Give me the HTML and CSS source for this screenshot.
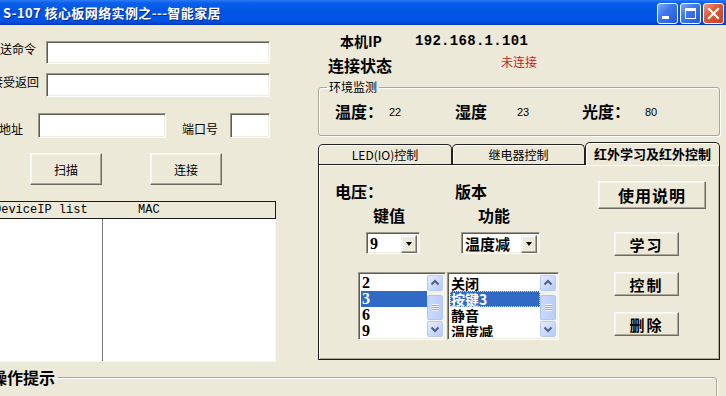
FILE: index.html
```html
<!DOCTYPE html>
<html lang="zh-CN">
<head>
<meta charset="utf-8">
<title>S-107 核心板网络实例之---智能家居</title>
<link rel="stylesheet" href="styles.css">
</head>
<body>
<div class="window">
  <div class="titlebar">
    <span class="title">S-107 核心板网络实例之---智能家居</span>
    <div class="tbtns">
      <span class="tbtn blue"><svg width="19" height="19" viewBox="0 0 19 19"><rect x="4" y="12" width="7" height="3" fill="#fff"/></svg></span>
      <span class="tbtn blue"><svg width="19" height="19" viewBox="0 0 19 19"><rect x="4.5" y="4.5" width="10" height="10" fill="none" stroke="#fff" stroke-width="1"/><rect x="4" y="4" width="11" height="3" fill="#fff"/></svg></span>
      <span class="tbtn red"><svg width="19" height="19" viewBox="0 0 19 19"><path d="M5 5 L14 14 M14 5 L5 14" stroke="#fff" stroke-width="2.2" stroke-linecap="square"/></svg></span>
    </div>
  </div>

  <div class="main">
    <div class="left">
      <div class="row r1"><span class="lbl w58">发送命令</span><span class="edit w224"></span></div>
      <div class="row r2"><span class="lbl w58 shift">接受返回</span><span class="edit w224"></span></div>
      <div class="row r3"><span class="lbl w50">IP地址</span><span class="edit w128"></span><span class="lbl port">端口号</span><span class="edit w40"></span></div>
      <div class="btnrow"><button class="btn w72">扫描</button><button class="btn w72">连接</button></div>
      <div class="listview">
        <div class="lvhead"><span class="c1">DeviceIP list</span><span class="c2">MAC</span></div>
        <div class="lvbody"><div class="col1"></div><div class="col2"></div></div>
      </div>
    </div>

    <div class="right">
      <div class="ipline"><span class="iplbl">本机IP</span><span class="ipval">192.168.1.101</span></div>
      <div class="status"><span class="stlbl">连接状态</span><span class="stval">未连接</span></div>
      <fieldset class="group env">
        <legend>环境监测</legend>
        <div class="envrow">
          <span class="k w54">温度：</span><span class="v w66">22</span>
          <span class="k w62">湿度</span><span class="v w65">23</span>
          <span class="k w63">光度：</span><span class="v">80</span>
        </div>
      </fieldset>

      <div class="tabs">
        <span class="tab t1">LED(IO)控制</span>
        <span class="tab t2">继电器控制</span>
        <span class="tab t3 active">红外学习及红外控制</span>
      </div>
      <div class="panel">
        <div class="pleft">
          <div class="prow pa"><span class="k w120">电压：</span><span class="k">版本</span></div>
          <div class="prow pb"><span class="k w105">键值</span><span class="k">功能</span></div>
          <div class="prow pc">
            <div class="combo cb1"><span class="ctext num">9</span><span class="cbtn"><i class="tri"></i></span></div>
            <div class="combo cb2"><span class="ctext">温度减</span><span class="cbtn"><i class="tri"></i></span></div>
          </div>
          <div class="prow pd">
            <div class="lb lb1">
              <div class="items num">
                <div class="item">2</div>
                <div class="item sel">3</div>
                <div class="item">6</div>
                <div class="item">9</div>
              </div>
              <div class="sb">
                <span class="sbb"><svg width="14" height="14" viewBox="0 0 14 14"><path d="M3.5 8.5 L7 5 L10.5 8.5" fill="none" stroke="#4D6185" stroke-width="2"/></svg></span>
                <span class="track"><span class="thumb"><i class="grip"></i></span></span>
                <span class="sbb"><svg width="14" height="14" viewBox="0 0 14 14"><path d="M3.5 5.5 L7 9 L10.5 5.5" fill="none" stroke="#4D6185" stroke-width="2"/></svg></span>
              </div>
            </div>
            <div class="lb lb2">
              <div class="items">
                <div class="item">关闭</div>
                <div class="item sel focus">按键3</div>
                <div class="item">静音</div>
                <div class="item">温度减</div>
              </div>
              <div class="sb">
                <span class="sbb"><svg width="14" height="14" viewBox="0 0 14 14"><path d="M3.5 8.5 L7 5 L10.5 8.5" fill="none" stroke="#4D6185" stroke-width="2"/></svg></span>
                <span class="track"><span class="thumb"><i class="grip"></i></span></span>
                <span class="sbb"><svg width="14" height="14" viewBox="0 0 14 14"><path d="M3.5 5.5 L7 9 L10.5 5.5" fill="none" stroke="#4D6185" stroke-width="2"/></svg></span>
              </div>
            </div>
          </div>
        </div>
        <div class="pright">
          <button class="btn big help">使用说明</button>
          <button class="btn big act learn">学习</button>
          <button class="btn big act">控制</button>
          <button class="btn big act">删除</button>
        </div>
      </div>
    </div>
  </div>

  <fieldset class="group tips"><legend>操作提示</legend></fieldset>
</div>
</body>
</html>
```

FILE: styles.css
```css
* { box-sizing: border-box; }
html, body { margin: 0; padding: 0; }
body {
  width: 726px;
  height: 396px;
  overflow: hidden;
  background: #ECE9D8;
  font-family: "Noto Sans CJK SC", "Liberation Sans", sans-serif;
  font-size: 12px;
  color: #000;
}
.window {
  width: 726px;
  height: 396px;
  overflow: hidden;
  display: flex;
  flex-direction: column;
}

/* title bar */
.titlebar {
  flex: none;
  height: 25px;
  display: flex;
  align-items: center;
  justify-content: space-between;
  padding: 0 2px 0 3px;
  background: linear-gradient(#2C7BF5 0%, #0A5FEB 12%, #0054E3 45%, #0055E8 80%, #0049D4 92%, #0A3BAE 100%);
}
.title {
  color: #fff;
  font-weight: bold;
  font-size: 13px;
  letter-spacing: 0.4px;
  text-shadow: 1px 1px 0 #0A2A8F;
  white-space: nowrap;
}
.tbtns { display: flex; gap: 2px; padding-top: 1px; }
.tbtn {
  width: 21px;
  height: 21px;
  border: 1px solid #fff;
  border-radius: 3px;
  display: flex;
  align-items: center;
  justify-content: center;
}
.tbtn.blue { background: linear-gradient(135deg, #7FA9FA 0%, #3C78EE 40%, #2158DC 100%); }
.tbtn.red { background: linear-gradient(135deg, #F39A80 0%, #E05A38 40%, #C8401F 100%); }

/* main two columns */
.main {
  flex: none;
  height: 341px;
  margin-left: -12px;
  display: grid;
  grid-template-columns: 288px 402px;
  column-gap: 42px;
}

/* controls */
.edit {
  display: block;
  background: #fff;
  border: 1px solid;
  border-color: #9C9A8C #FFFFFF #FFFFFF #9C9A8C;
  box-shadow: inset 1px 1px 0 #5E5C52, inset -1px -1px 0 #EFEDE3;
}
.btn {
  font: inherit;
  color: #000;
  background: #ECE9D8;
  border: 1px solid;
  border-color: #FFFFFF #6E6C62 #6E6C62 #FFFFFF;
  box-shadow: inset -1px -1px 0 #ACA899, inset 1px 1px 0 #F6F5EE;
  padding: 0;
  display: flex;
  align-items: center;
  justify-content: center;
}

/* left column */
.row { display: flex; align-items: flex-start; }
.lbl { line-height: 14px; white-space: nowrap; flex: none; }
.w58 { width: 58px; }
.w50 { width: 50px; }
.shift { padding-left: 3px; }
.w224 { width: 224px; }
.w128 { width: 128px; }
.w40 { width: 40px; }
.r1 { margin-top: 16px; height: 23px; }
.r1 .lbl { padding-top: 1px; }
.r1 .edit { height: 23px; }
.r2 { margin-top: 9px; height: 24px; }
.r2 .lbl { padding-top: 2px; }
.r2 .edit { height: 24px; }
.r3 { margin-top: 16px; height: 25px; }
.r3 .edit { height: 25px; }
.r3 .lbl { padding-top: 9px; }
.port { margin-left: 16px; width: 48px; }
.btnrow {
  margin-top: 15px;
  height: 32px;
  padding-left: 42px;
  display: flex;
  gap: 48px;
}
.w72 { width: 72px; height: 32px; }
.listview {
  margin-top: 16px;
  height: 161px;
  display: flex;
  flex-direction: column;
}
.lvhead {
  flex: none;
  height: 18px;
  border: 1px solid #1A1A1A;
  background: #ECE9D8;
  display: flex;
  align-items: center;
  font-family: "Liberation Mono", "DejaVu Sans Mono", monospace;
  font-size: 12px;
  padding-left: 5px;
}
.c1 { width: 144px; }
.lvbody {
  flex: 1;
  display: flex;
  background: #fff;
  border-right: 1px solid #F7F6F0;
  border-bottom: 1px solid #F7F6F0;
}
.col1 { width: 115px; border-right: 1px solid #777; }
.col2 { flex: 1; }

/* right column */
.ipline {
  margin-top: 8px;
  height: 16px;
  line-height: 16px;
  padding-left: 22px;
  font-weight: bold;
  font-size: 14px;
  display: flex;
}
.iplbl { width: 75px; }
.ipval { font-family: "Liberation Mono", "DejaVu Sans Mono", monospace; font-size: 14px; letter-spacing: 0.3px; }
.status {
  margin-top: 6px;
  height: 20px;
  line-height: 20px;
  padding-left: 10px;
  display: flex;
  align-items: flex-start;
}
.stlbl { width: 173px; font-weight: bold; font-size: 16px; }
.stval { color: #C41E1E; font-size: 12px; line-height: 14px; padding-top: 0; }

.group {
  margin: 0;
  padding: 0;
  min-width: 0;
  border: 1px solid #A9A795;
  border-radius: 3px;
  box-shadow: inset 1px 1px 0 #FFFFFF, 1px 1px 0 #FFFFFF;
}
.group legend {
  margin-left: 8px;
  padding: 0 2px;
  line-height: 14px;
  font-size: 12px;
}
.env { margin-top: 5px; padding-bottom: 14px; }
.envrow {
  margin-top: 7px;
  height: 20px;
  padding-left: 16px;
  display: flex;
  align-items: center;
}
.k { font-weight: bold; font-size: 16px; line-height: 16px; white-space: nowrap; }
.v { font-family: "Liberation Sans", sans-serif; font-size: 11px; padding-top: 1px; }
.w54 { width: 54px; }
.w66 { width: 66px; }
.w62 { width: 62px; }
.w65 { width: 65px; }
.w63 { width: 63px; }
.w120 { width: 120px; }
.w105 { width: 105px; }

/* tabs */
.tabs {
  margin-top: 6px;
  height: 22px;
  display: flex;
  align-items: flex-end;
}
.tab {
  height: 20px;
  border: 1px solid #222;
  border-bottom: none;
  border-radius: 5px 5px 0 0;
  background: #ECE9D8;
  box-shadow: inset 1px 1px 0 #FFFFFF;
  display: flex;
  align-items: center;
  justify-content: center;
  font-size: 12px;
  white-space: nowrap;
}
.t1 { width: 134px; }
.t2 { width: 133px; }
.t3 { width: 135px; }
.tab.active {
  height: 23px;
  margin-bottom: -1px;
  position: relative;
  z-index: 1;
  font-weight: bold;
  font-size: 13px;
  padding-bottom: 2px;
}
.panel {
  height: 196px;
  border: 1px solid #1E1E1E;
  box-shadow: inset 1px 1px 0 #FFFFFF, inset -1px -1px 0 #ACA899;
  padding: 16px 0 0 16px;
  display: grid;
  grid-template-columns: 263px 108px;
  align-items: start;
}
.prow { display: flex; }
.pa { margin-top: 2px; height: 16px; }
.pb { margin-top: 8px; height: 16px; padding-left: 38px; }
.pc { margin-top: 9px; height: 22px; }
.pd { margin-top: 18px; height: 68px; padding-left: 23px; }

.combo {
  height: 22px;
  display: flex;
  background: #fff;
  border: 1px solid;
  border-color: #9C9A8C #FFFFFF #FFFFFF #9C9A8C;
  box-shadow: inset 1px 1px 0 #5E5C52, inset -1px -1px 0 #EFEDE3;
  padding: 2px 2px 2px 2px;
}
.cb1 { width: 54px; margin-left: 31px; }
.cb2 { width: 79px; margin-left: 41px; }
.ctext {
  flex: 1;
  font-weight: bold;
  font-size: 15px;
  line-height: 18px;
  padding-left: 1px;
  white-space: nowrap;
}
.num { font-family: "Liberation Serif", "DejaVu Serif", serif; font-weight: bold; }
.ctext.num { font-size: 16px; }
.cbtn {
  width: 16px;
  height: 18px;
  flex: none;
  background: #ECE9D8;
  border: 1px solid;
  border-color: #F1EFE2 #6E6C62 #6E6C62 #F1EFE2;
  box-shadow: inset -1px -1px 0 #ACA899, inset 1px 1px 0 #fff;
  display: flex;
  align-items: center;
  justify-content: center;
}
.tri {
  width: 0;
  height: 0;
  border-left: 3.5px solid transparent;
  border-right: 3.5px solid transparent;
  border-top: 4px solid #000;
}

.lb {
  height: 68px;
  display: flex;
  background: #fff;
  border: 1px solid;
  border-color: #9C9A8C #FFFFFF #FFFFFF #9C9A8C;
  box-shadow: inset 1px 1px 0 #5E5C52, inset -1px -1px 0 #EFEDE3;
  padding: 2px;
}
.lb1 { width: 88px; }
.lb2 { width: 112px; margin-left: 1px; }
.items { flex: 1; overflow: hidden; }
.item {
  height: 16px;
  line-height: 16px;
  font-weight: bold;
  font-size: 14px;
  padding-left: 1px;
  white-space: nowrap;
  overflow: hidden;
}
.items.num .item { font-size: 16px; }
.item.sel { background: #316AC5; color: #fff; }
.item.focus { outline: 1px dotted #C8D6F0; outline-offset: -1px; }
.sb {
  width: 16px;
  flex: none;
  display: flex;
  flex-direction: column;
  background: #F3F2EC;
}
.sbb {
  height: 16px;
  flex: none;
  border: 1px solid #B7CBF5;
  border-radius: 2px;
  background: linear-gradient(135deg, #E4ECFE 0%, #C8D7FC 60%, #B6C9F7 100%);
  display: flex;
  align-items: center;
  justify-content: center;
}
.track { flex: 1; display: flex; padding: 4px 0 1px 0; }
.thumb {
  flex: 1;
  border: 1px solid #B0C4F2;
  border-radius: 2px;
  background: linear-gradient(90deg, #CAD9FD 0%, #BACDF9 100%);
  display: flex;
  align-items: center;
  justify-content: center;
}
.grip {
  width: 7px;
  height: 7px;
  background: repeating-linear-gradient(#EEF3FE 0 1px, #8DAEEF 1px 2px);
}

.pright { display: flex; flex-direction: column; }
.big { font-weight: bold; font-size: 16px; letter-spacing: 1px; }
.help { width: 108px; height: 28px; }
.act { width: 65px; height: 24px; margin-left: 16px; margin-top: 16px; font-size: 15px; letter-spacing: 2px; }
.act.learn { margin-top: 23px; }

/* bottom group */
.tips {
  flex: none;
  margin-left: -20px;
  width: 737px;
  height: 50px;
}
.tips legend {
  font-weight: bold;
  font-size: 16px;
  line-height: 22px;
  padding: 0 3px 0 2px;
}
```
